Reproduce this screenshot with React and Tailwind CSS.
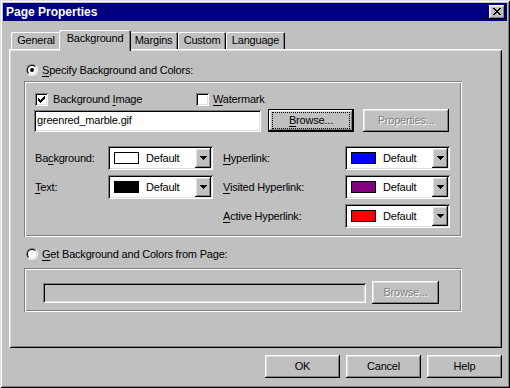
import React from "react";

const raised =
  "shadow-[inset_-1px_-1px_0_#000,inset_1px_1px_0_#fff,inset_-2px_-2px_0_#808080,inset_2px_2px_0_#dfdfdf]";
const raisedFocus =
  "shadow-[inset_0_0_0_1px_#000,inset_-2px_-2px_0_#000,inset_2px_2px_0_#fff,inset_-3px_-3px_0_#808080,inset_3px_3px_0_#dfdfdf]";
const sunken =
  "shadow-[inset_1px_1px_0_#808080,inset_-1px_-1px_0_#fff,inset_2px_2px_0_#000,inset_-2px_-2px_0_#dfdfdf]";
const etched =
  "shadow-[inset_1px_1px_0_#808080,inset_-1px_-1px_0_#fff,inset_2px_2px_0_#fff,inset_-2px_-2px_0_#808080]";
const tabShadow =
  "shadow-[inset_1px_1px_0_#fff,inset_-1px_0_0_#000,inset_-2px_0_0_#808080]";
const disabledText = "text-[#808080] [text-shadow:1px_1px_0_#fff]";

function Pix({ rows, color = "#000", className = "" }) {
  const w = rows[0].length;
  const h = rows.length;
  const rects = [];
  rows.forEach((r, y) => {
    [...r].forEach((c, x) => {
      if (c === "X")
        rects.push(<rect key={x + "-" + y} x={x} y={y} width="1" height="1" fill={color} />);
    });
  });
  return (
    <svg width={w} height={h} viewBox={`0 0 ${w} ${h}`} shapeRendering="crispEdges" className={className}>
      {rects}
    </svg>
  );
}

const closeRows = ["XX....XX", ".XX..XX.", "..XXXX..", "...XX...", "..XXXX..", ".XX..XX.", "XX....XX"];
const checkRows = ["......X", ".....XX", "X...XXX", "XX.XXX.", "XXXXX..", ".XXX...", "..X...."];
const arrowRows = ["XXXXXXX", ".XXXXX.", "..XXX..", "...X..."];

function U({ children }) {
  return <span className="underline underline-offset-[2px] decoration-1">{children}</span>;
}

function Radio({ checked }) {
  return (
    <div className="w-[12px] h-[12px] shrink-0 rounded-full border border-t-[#808080] border-l-[#808080] border-b-white border-r-white">
      <div className="w-full h-full rounded-full border border-t-black border-l-black border-b-[#dfdfdf] border-r-[#dfdfdf] bg-white flex items-center justify-center">
        {checked && <div className="w-[4px] h-[4px] rounded-full bg-black" />}
      </div>
    </div>
  );
}

function Checkbox({ checked }) {
  return (
    <div className={"relative w-[13px] h-[13px] shrink-0 bg-white " + sunken}>
      {checked && <Pix rows={checkRows} className="absolute left-[3px] top-[3px]" />}
    </div>
  );
}

function Combo({ swatch }) {
  return (
    <div className={"w-[105px] h-[24px] bg-white flex items-center pl-[6px] pr-[2px] " + sunken}>
      <div className={"w-[25px] h-[12px] border border-black shrink-0 " + swatch} />
      <span className="ml-[7px] flex-1">Default</span>
      <div className={"w-[16px] h-[20px] bg-[#c0c0c0] flex items-center justify-center shrink-0 " + raised}>
        <Pix rows={arrowRows} />
      </div>
    </div>
  );
}

function Tab({ w, children }) {
  return (
    <div className={"h-[17px] rounded-t-[2px] flex justify-center pt-[2px] " + w + " " + tabShadow}>
      {children}
    </div>
  );
}

export default function App() {
  return (
    <div className="w-[510px] h-[388px] bg-[#c0c0c0] p-[3px] flex flex-col font-['Liberation_Sans',Arial,sans-serif] text-[11px] leading-[13px] text-black tracking-[-0.2px] select-none shadow-[inset_1px_1px_0_#dfdfdf,inset_-1px_-1px_0_#000,inset_2px_2px_0_#fff,inset_-2px_-2px_0_#808080]">
      {/* Title bar */}
      <div className="h-[18px] bg-[#000080] flex items-center justify-between pl-[3px] pr-[2px]">
        <span className="text-white font-bold text-[12px] tracking-normal">Page Properties</span>
        <div className={"w-[16px] h-[14px] bg-[#c0c0c0] flex items-center justify-center " + raised}>
          <Pix rows={closeRows} className="-mt-px" />
        </div>
      </div>

      {/* Tab control */}
      <div className="ml-[6px] mt-[9px] w-[493px] flex flex-col">
        <div className="h-[19px] flex items-end pl-[2px]">
          <Tab w="w-[50px]">General</Tab>
          <div
            className={
              "relative z-10 -mx-[2px] -mb-[2px] h-[21px] w-[72px] bg-[#c0c0c0] rounded-t-[2px] flex justify-center pt-[2px] " +
              tabShadow
            }
          >
            Background
          </div>
          <Tab w="w-[49px]">Margins</Tab>
          <Tab w="w-[48px]">Custom</Tab>
          <Tab w="w-[59px]">Language</Tab>
        </div>

        <div className="relative h-[299px] bg-[#c0c0c0] pl-[15px] pt-[13px] flex flex-col shadow-[inset_1px_1px_0_#fff,inset_-1px_-1px_0_#000,inset_2px_2px_0_#dfdfdf,inset_-2px_-2px_0_#808080]">
          {/* Radio 1 */}
          <div className="h-[16px] flex items-center pl-[2px]">
            <Radio checked />
            <span className="ml-[4px]">
              <U>S</U>pecify Background and Colors:
            </span>
          </div>

          {/* Group 1 */}
          <div className={"mt-[3px] w-[438px] h-[156px] pl-[10px] pt-[12px] flex flex-col " + etched}>
            <div className="h-[13px] flex items-center pl-[1px]">
              <div className="w-[161px] flex items-center">
                <Checkbox checked />
                <span className="ml-[5px]">
                  Background <U>I</U>mage
                </span>
              </div>
              <Checkbox />
              <span className="ml-[4px]">
                <U>W</U>atermark
              </span>
            </div>

            <div className="mt-[3px] h-[23px] flex items-center">
              <div className={"w-[227px] h-[22px] bg-white flex items-center pl-[3px] " + sunken}>
                greenred_marble.gif
              </div>
              <div className={"ml-[7px] w-[86px] h-[23px] flex bg-[#c0c0c0] " + raisedFocus}>
                <div className="flex-1 mx-[4px] my-[3px] border border-dotted border-black flex items-center justify-center">
                  <span>
                    <U>B</U>rowse...
                  </span>
                </div>
              </div>
              <div className={"ml-[9px] w-[86px] h-[23px] flex items-center justify-center " + raised}>
                <span className={disabledText}>Properties...</span>
              </div>
            </div>

            <div className="mt-[14px] flex flex-col gap-[5px]">
              <div className="h-[24px] flex items-center">
                <div className="w-[74px] pl-[1px]">
                  Ba<U>c</U>kground:
                </div>
                <Combo swatch="bg-white" />
                <div className="ml-[10px] w-[122px]">
                  <U>H</U>yperlink:
                </div>
                <Combo swatch="bg-[#0000ff]" />
              </div>
              <div className="h-[24px] flex items-center">
                <div className="w-[74px] pl-[1px]">
                  <U>T</U>ext:
                </div>
                <Combo swatch="bg-black" />
                <div className="ml-[10px] w-[122px]">
                  <U>V</U>isited Hyperlink:
                </div>
                <Combo swatch="bg-[#800080]" />
              </div>
              <div className="h-[24px] flex items-center">
                <div className="w-[74px]" />
                <div className="w-[105px]" />
                <div className="ml-[10px] w-[122px]">
                  <U>A</U>ctive Hyperlink:
                </div>
                <Combo swatch="bg-[#ff0000]" />
              </div>
            </div>
          </div>

          {/* Radio 2 */}
          <div className="mt-[9px] h-[16px] flex items-center pl-[2px]">
            <Radio />
            <span className="ml-[4px]">
              <U>G</U>et Background and Colors from Page:
            </span>
          </div>

          {/* Group 2 */}
          <div className={"mt-[6px] w-[438px] h-[44px] pl-[19px] pt-[13px] " + etched}>
            <div className="h-[23px] flex items-center">
              <div className={"w-[323px] h-[20px] bg-[#c0c0c0] " + sunken} />
              <div className={"ml-[6px] w-[67px] h-[23px] flex items-center justify-center " + raised}>
                <span className={disabledText}>Browse...</span>
              </div>
            </div>
          </div>
        </div>
      </div>

      {/* Bottom buttons */}
      <div className="ml-[6px] mt-[7px] w-[493px] flex justify-end gap-[6px]">
        <div className={"w-[75px] h-[23px] flex items-center justify-center " + raised}>OK</div>
        <div className={"w-[75px] h-[23px] flex items-center justify-center " + raised}>Cancel</div>
        <div className={"w-[75px] h-[23px] flex items-center justify-center " + raised}>Help</div>
      </div>
    </div>
  );
}
